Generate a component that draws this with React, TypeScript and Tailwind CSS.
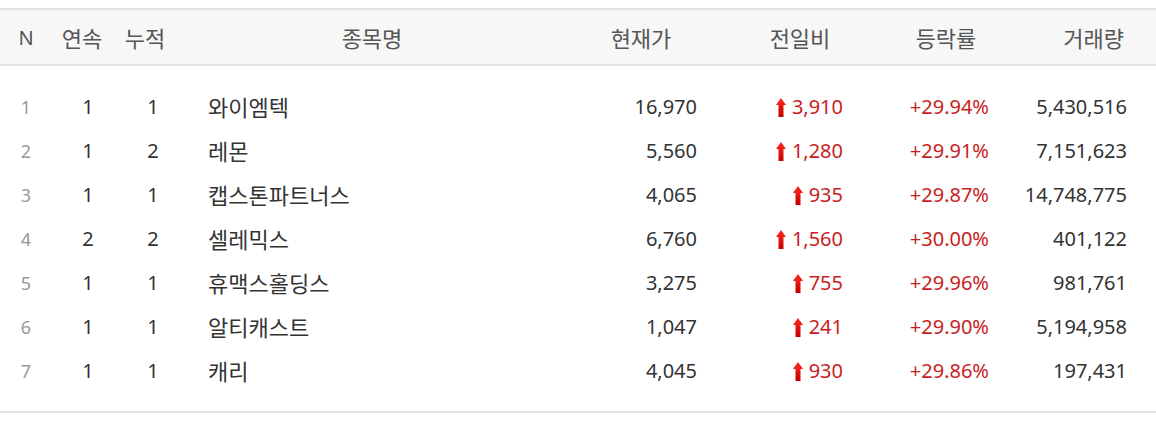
import React from "react";

type Row = {
  n: number;
  a: number;
  b: number;
  name: string;
  price: string;
  diff: string;
  rate: string;
  vol: string;
};

const rows: Row[] = [
  { n: 1, a: 1, b: 1, name: "와이엠텍", price: "16,970", diff: "3,910", rate: "+29.94%", vol: "5,430,516" },
  { n: 2, a: 1, b: 2, name: "레몬", price: "5,560", diff: "1,280", rate: "+29.91%", vol: "7,151,623" },
  { n: 3, a: 1, b: 1, name: "캡스톤파트너스", price: "4,065", diff: "935", rate: "+29.87%", vol: "14,748,775" },
  { n: 4, a: 2, b: 2, name: "셀레믹스", price: "6,760", diff: "1,560", rate: "+30.00%", vol: "401,122" },
  { n: 5, a: 1, b: 1, name: "휴맥스홀딩스", price: "3,275", diff: "755", rate: "+29.96%", vol: "981,761" },
  { n: 6, a: 1, b: 1, name: "알티캐스트", price: "1,047", diff: "241", rate: "+29.90%", vol: "5,194,958" },
  { n: 7, a: 1, b: 1, name: "캐리", price: "4,045", diff: "930", rate: "+29.86%", vol: "197,431" },
];

const cols = "grid grid-cols-[52px_60px_60px_400px_138px_180px_112px_154px]";

function UpArrow() {
  return (
    <svg width="10" height="19" viewBox="0 0 10 19" className="mr-[6px] mt-[1px] shrink-0">
      <defs>
        <linearGradient id="ag" x1="0" y1="0" x2="0" y2="1">
          <stop offset="0" stopColor="#ff2a1a" />
          <stop offset="1" stopColor="#c20000" />
        </linearGradient>
      </defs>
      <polygon points="5,0 10,7 7.5,7 7.5,19 2.5,19 2.5,7 0,7" fill="url(#ag)" />
    </svg>
  );
}

export default function App() {
  return (
    <div
      className="w-[1156px] h-[422px] bg-white pt-[8px] text-[20px] text-[#333]"
      style={{ fontFamily: '"Noto Sans", "Noto Sans CJK KR", sans-serif' }}
    >
      <div className={`${cols} h-[58px] items-center border-t-2 border-b-2 border-[#e2e2e2] bg-[#f7f7f7] text-[#555] leading-none pt-[2px]`}>
        <div className="text-center">N</div>
        <div className="text-center text-[22px]">연속</div>
        <div className="text-center pl-[6px] text-[22px]">누적</div>
        <div className="text-center text-[22px]">종목명</div>
        <div className="text-center text-[22px]">현재가</div>
        <div className="text-center text-[22px]">전일비</div>
        <div className="text-center text-[22px]">등락률</div>
        <div className="text-right pr-[32px] text-[22px]">거래량</div>
      </div>
      <div className="pt-[19px] pb-[18px] border-b-2 border-[#e2e2e2]">
        {rows.map((r) => (
          <div key={r.n} className={`${cols} h-[44px] items-center leading-none`}>
            <div className="text-center text-[18px] text-[#999]">{r.n}</div>
            <div className="text-center pl-[12px]">{r.a}</div>
            <div className="text-center pl-[22px]">{r.b}</div>
            <div className="pl-[36px] text-[22px]">{r.name}</div>
            <div className="text-right pr-[13px]">{r.price}</div>
            <div className="flex items-center justify-end pr-[47px] text-[#c81e1e]">
              <UpArrow />
              <span>{r.diff}</span>
            </div>
            <div className="text-right pr-[13px] text-[#c81e1e]">{r.rate}</div>
            <div className="text-right pr-[29px]">{r.vol}</div>
          </div>
        ))}
      </div>
    </div>
  );
}
